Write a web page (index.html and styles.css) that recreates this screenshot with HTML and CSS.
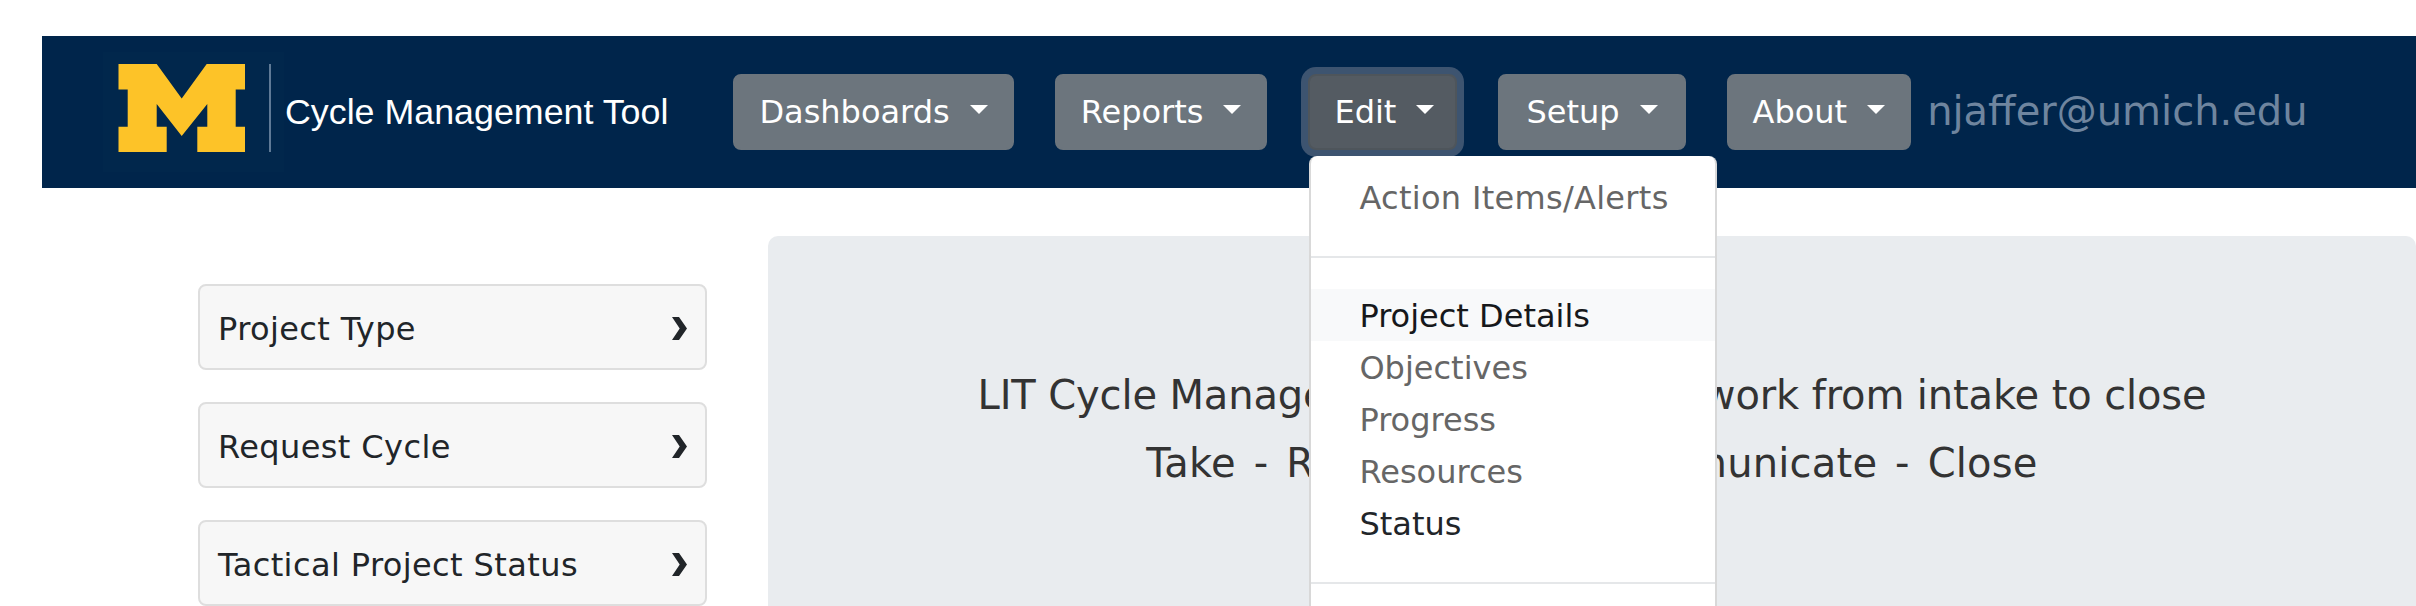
FILE: index.html
```html
<!DOCTYPE html>
<html lang="en">
<head>
  <meta charset="UTF-8">
  <title>Cycle Management Tool</title>
  <meta name="viewport" content="width=device-width, initial-scale=1.0" />
  <link rel="stylesheet" href="styles.css">
</head>
<body>
  <nav class="navbar">
    <svg class="logo" width="181" height="120" viewBox="0 0 181 120">
      <rect width="181" height="120" fill="#01274c" />
      <polygon fill="#fdc328" points="15.5,12 53.7,12 78.7,46.5 103.7,12 142,12 142,37.5 132.7,37.5 132.7,74.7 142,74.7 142,100 94.3,100 94.3,74.7 104.3,74.7 104.3,52 78.7,84 53.7,52 53.7,74.7 63.7,74.7 63.7,100 15.5,100 15.5,74.7 24.7,74.7 24.7,37.5 15.5,37.5" />
      <rect x="166" y="12" width="2" height="88" fill="#5f7a96" />
    </svg>
    <span class="brand">Cycle Management Tool</span>
    <div class="nav-items">
      <button class="nav-btn" type="button">Dashboards<i class="caret"></i></button>
      <button class="nav-btn" type="button">Reports<i class="caret"></i></button>
      <div class="dropdown">
        <button class="nav-btn nav-btn-open" type="button">Edit<i class="caret"></i></button>
        <div class="dropdown-menu">
          <a class="dropdown-item muted first">Action Items/Alerts</a>
          <hr class="dropdown-divider">
          <a class="dropdown-item hover">Project Details</a>
          <a class="dropdown-item muted">Objectives</a>
          <a class="dropdown-item muted">Progress</a>
          <a class="dropdown-item muted">Resources</a>
          <a class="dropdown-item">Status</a>
          <hr class="dropdown-divider">
        </div>
      </div>
      <button class="nav-btn nav-btn-wide" type="button">Setup<i class="caret"></i></button>
      <button class="nav-btn" type="button">About<i class="caret"></i></button>
    </div>
    <span class="user-email">njaffer@umich.edu</span>
  </nav>

  <div class="content">
    <div class="sidebar">
      <div class="side-item">Project Type
        <svg class="chevron" width="15" height="23" viewBox="0 0 15 23"><polygon points="0,0 7,0 15,11.5 7,23 0,23 7.7,11.5" /></svg>
      </div>
      <div class="side-item">Request Cycle
        <svg class="chevron" width="15" height="23" viewBox="0 0 15 23"><polygon points="0,0 7,0 15,11.5 7,23 0,23 7.7,11.5" /></svg>
      </div>
      <div class="side-item">Tactical Project Status
        <svg class="chevron" width="15" height="23" viewBox="0 0 15 23"><polygon points="0,0 7,0 15,11.5 7,23 0,23 7.7,11.5" /></svg>
      </div>
    </div>
    <div class="jumbotron">
      <p class="lead">LIT Cycle Management Tool handles work from intake to close</p>
      <p class="steps">Take - Review - Act - Communicate - Close</p>
    </div>
  </div>
</body>
</html>
```

FILE: styles.css
```css
html, body {
    margin: 0;
    height: 606px;
    overflow: hidden;
    background: #fff;
}

body {
    font-family: "DejaVu Sans", Verdana, sans-serif;
    font-size: 32px;
    color: #212529;
    padding-top: 36px;
    box-sizing: border-box;
}

.navbar {
    display: flex;
    align-items: center;
    height: 152px;
    margin-left: 42px;
    padding-left: 61px;
    background: #00254b;
}

.logo {
    flex: none;
    display: block;
}

.brand {
    font-family: "Liberation Sans", Arial, sans-serif;
    font-size: 35.8px;
    color: #fff;
    margin-left: 1px;
    white-space: nowrap;
}

.nav-items {
    display: flex;
    align-items: center;
    gap: 41px;
    margin-left: 65px;
}

.nav-btn {
    display: flex;
    align-items: center;
    height: 76px;
    padding: 0 24px;
    border: 2px solid #6c757d;
    border-radius: 8px;
    background: #6c757d;
    color: #fff;
    font: inherit;
    white-space: nowrap;
}

.nav-btn-open {
    padding-right: 21px;
    background: #545b62;
    border-color: #4e555b;
    box-shadow: 0 0 0 7px #3d5470;
}

.nav-btn-wide {
    padding: 0 26px;
}

.caret {
    display: block;
    width: 0;
    height: 0;
    margin-left: 20px;
    margin-bottom: 5px;
    border-top: 9px solid #fff;
    border-left: 9px solid transparent;
    border-right: 9px solid transparent;
}

.dropdown {
    position: relative;
}

.dropdown-menu {
    position: absolute;
    top: 82px;
    left: 1px;
    width: 404px;
    height: 500px;
    padding-top: 15px;
    background: #fff;
    border: 2px solid rgba(0, 0, 0, .15);
    border-top: 0;
    border-radius: 8px;
    z-index: 5;
}

.dropdown-item {
    display: block;
    height: 52px;
    line-height: 55px;
    padding-left: 48px;
    color: #212529;
    white-space: nowrap;
}

.dropdown-item.first {
    letter-spacing: .3px;
}

.dropdown-item.muted {
    color: #666;
}

.dropdown-item.hover {
    color: #16181b;
    background: #f8f9fa;
}

.dropdown-divider {
    height: 2px;
    margin: 33px 0 31px;
    border: 0;
    background: #e5e7e9;
}

.user-email {
    margin-left: 16px;
    margin-bottom: 2px;
    font-size: 40px;
    color: #6f859f;
    white-space: nowrap;
}

.content {
    display: flex;
    margin-top: 48px;
}

.sidebar {
    flex: none;
    width: 509px;
    margin-left: 198px;
    padding-top: 48px;
}

.side-item {
    display: flex;
    align-items: center;
    justify-content: space-between;
    box-sizing: border-box;
    height: 86px;
    margin-bottom: 32px;
    padding: 3px 18px 0 18px;
    background: #f7f7f7;
    border: 2px solid #dedede;
    border-radius: 8px;
    letter-spacing: .4px;
}

.chevron {
    flex: none;
    fill: #212529;
}

.jumbotron {
    flex: 1;
    margin-left: 61px;
    height: 500px;
    padding-top: 125px;
    box-sizing: border-box;
    background: #e9ecef;
    border-radius: 10px;
    font-size: 40px;
    line-height: 68px;
    color: #333;
    text-align: center;
}

.jumbotron p {
    margin: 0;
    white-space: nowrap;
}

.lead {
    letter-spacing: -.13px;
}

.steps {
    letter-spacing: .2px;
    word-spacing: 5px;
}
```
